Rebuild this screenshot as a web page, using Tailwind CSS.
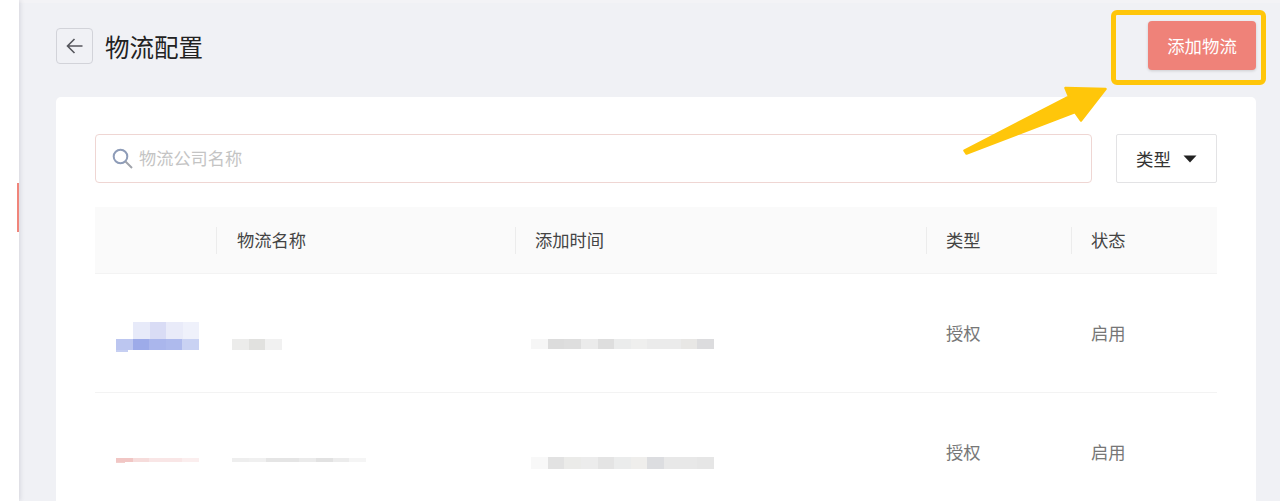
<!DOCTYPE html>
<html lang="zh">
<head>
<meta charset="utf-8">
<script src="https://cdn.jsdelivr.net/npm/@tailwindcss/browser@4"></script>
</head>
<body class="overflow-hidden bg-white">
<div class="relative flex h-[501px] w-[1280px] overflow-hidden font-['Liberation_Sans','Noto_Sans_CJK_SC',sans-serif]">
  <aside class="relative z-10 flex h-full w-[19px] shrink-0 flex-col bg-white pt-[183px] shadow-[1px_0_5px_rgba(0,0,40,0.12)]">
    <div class="ml-auto h-[49px] w-[2px] bg-[#f0857b]"></div>
  </aside>
  <main class="h-full flex-1 border-t-[3px] border-[#f3f3f6] bg-[#f0f1f5] pl-[37px] pr-[24px]">
    <header class="flex h-[94px] items-start justify-between">
      <div class="mt-[25px] flex items-start">
        <button class="flex h-[36px] w-[37px] items-center justify-center rounded-[4px] border border-[#d2d3d9]">
          <svg class="h-[20px] w-[20px]" viewBox="0 0 20 20" fill="none" stroke="#55565c" stroke-width="1.6"><path d="M17.5 10H2.5M9.5 3L2.5 10l7 7"/></svg>
        </button>
        <h1 class="ml-[12px] pt-[3px] text-[24.5px] leading-[36px] text-[#222]">物流配置</h1>
      </div>
      <button class="mt-[18px] h-[49px] w-[108px] rounded-[4px] bg-[#ef8279] pt-[3px] text-[17.4px] text-white shadow-[0_1px_3px_rgba(0,0,0,0.15)]">添加物流</button>
    </header>
    <section class="h-[500px] rounded-t-[5px] bg-white px-[39px] pt-[37px]">
      <div class="flex justify-between">
        <div class="flex h-[49px] w-[997px] items-center rounded-[4px] border border-[#efd6d3] pl-[16px]">
          <svg class="h-[21px] w-[21px]" viewBox="0 0 21 21" fill="none" stroke-width="2"><circle cx="8.5" cy="8.5" r="6.8" stroke="#8e9cb8"/><path d="M13.5 13.5L20 20" stroke="#a0a3ab"/></svg>
          <span class="ml-[6px] pt-[2px] text-[17.2px] text-[#c4c4c4]">物流公司名称</span>
        </div>
        <button class="flex h-[49px] w-[101px] items-center justify-center rounded-[2px] border border-[#e3e3e5] text-[17.4px] text-[#333]">
          <span class="pt-[3px]">类型</span>
          <svg class="ml-[12px] h-[8px] w-[14px]" viewBox="0 0 14 8"><path d="M0.5 0.5h13L7 7.5z" fill="#222"/></svg>
        </button>
      </div>
      <div class="mt-[24px] grid grid-cols-[122px_299px_411px_145px_145px]">
        <div class="flex h-[67px] items-center border-b border-[#f3f3f3] bg-[#fafafa]"><span class="ml-auto h-[27px] w-px bg-[#ececec]"></span></div>
        <div class="flex h-[67px] items-center border-b border-[#f3f3f3] bg-[#fafafa] pl-[20px] text-[17.3px] text-[#444]"><span class="pt-[4px]">物流名称</span><span class="ml-auto h-[27px] w-px bg-[#ececec]"></span></div>
        <div class="flex h-[67px] items-center border-b border-[#f3f3f3] bg-[#fafafa] pl-[19px] text-[17.3px] text-[#444]"><span class="pt-[4px]">添加时间</span><span class="ml-auto h-[27px] w-px bg-[#ececec]"></span></div>
        <div class="flex h-[67px] items-center border-b border-[#f3f3f3] bg-[#fafafa] pl-[19px] text-[17.3px] text-[#444]"><span class="pt-[4px]">类型</span><span class="ml-auto h-[27px] w-px bg-[#ececec]"></span></div>
        <div class="flex h-[67px] items-center border-b border-[#f3f3f3] bg-[#fafafa] pl-[19px] text-[17.3px] text-[#444]"><span class="pt-[4px]">状态</span></div>

        <div class="flex h-[119px] flex-col justify-start border-b border-[#f3f3f3] pl-[21px] pt-[48px]">
          <div class="ml-[17px] flex h-[17px] w-[66px] blur-[0.5px]"><i class="flex-1 bg-[#e7eaf9]"></i><i class="flex-1 bg-[#d9dcf5]"></i><i class="flex-1 bg-[#e9ebf9]"></i><i class="flex-1 bg-[#eff1fb]"></i></div>
          <div class="flex h-[11px] w-[83px] blur-[0.5px]"><i class="flex-1 bg-[#bcc6f0]"></i><i class="flex-1 bg-[#9dabe9]"></i><i class="flex-1 bg-[#aab6ec]"></i><i class="flex-1 bg-[#aebaed]"></i><i class="flex-1 bg-[#c9d2f3]"></i></div>
          <div class="h-[2px] w-[12px] bg-[#c6cff2] blur-[0.4px]"></div>
        </div>
        <div class="h-[119px] border-b border-[#f3f3f3] pl-[15px] pt-[65px]">
          <div class="flex h-[11px] w-[50px] blur-[0.5px]"><i class="flex-1 bg-[#ececeb]"></i><i class="flex-1 bg-[#e1e1df]"></i><i class="flex-1 bg-[#f1f1f1]"></i></div>
        </div>
        <div class="h-[119px] border-b border-[#f3f3f3] pl-[15px] pt-[65px]">
          <div class="flex h-[10px] w-[183px] blur-[0.5px]"><i class="flex-1 bg-[#f6f6f6]"></i><i class="flex-1 bg-[#dcdcdc]"></i><i class="flex-1 bg-[#dedede]"></i><i class="flex-1 bg-[#ebebeb]"></i><i class="flex-1 bg-[#dedede]"></i><i class="flex-1 bg-[#ebecec]"></i><i class="flex-1 bg-[#efefee]"></i><i class="flex-1 bg-[#ebebeb]"></i><i class="flex-1 bg-[#ebebeb]"></i><i class="flex-1 bg-[#e8e7e5]"></i><i class="flex-1 bg-[#dcdcde]"></i></div>
        </div>
        <div class="flex h-[119px] items-center border-b border-[#f3f3f3] pl-[19px] pt-[3px] text-[17.3px] text-[#777]">授权</div>
        <div class="flex h-[119px] items-center border-b border-[#f3f3f3] pl-[19px] pt-[3px] text-[17.3px] text-[#777]">启用</div>

        <div class="h-[119px] pl-[21px] pt-[65px]">
          <div class="flex h-[4px] w-[83px] blur-[0.4px]"><i class="flex-1 bg-[#f1c6c4]"></i><i class="flex-1 bg-[#f6dcdb]"></i><i class="flex-1 bg-[#f9e6e6]"></i><i class="flex-1 bg-[#f9e6e6]"></i><i class="flex-1 bg-[#fbeeee]"></i></div>
          <div class="h-[1px] w-[9px] bg-[#f3cfcd]"></div>
        </div>
        <div class="h-[119px] pl-[15px] pt-[65px]">
          <div class="flex h-[4px] w-[134px] blur-[0.4px]"><i class="flex-1 bg-[#eeeeee]"></i><i class="flex-1 bg-[#f0f0f0]"></i><i class="flex-1 bg-[#e5e5e5]"></i><i class="flex-1 bg-[#e5e5e5]"></i><i class="flex-1 bg-[#ebebeb]"></i><i class="flex-1 bg-[#e2e2e2]"></i><i class="flex-1 bg-[#ececec]"></i><i class="flex-1 bg-[#f5f5f5]"></i></div>
        </div>
        <div class="h-[119px] pl-[15px] pt-[64px]">
          <div class="flex h-[12px] w-[183px] blur-[0.5px]"><i class="flex-1 bg-[#f8f8f8]"></i><i class="flex-1 bg-[#e2e2e2]"></i><i class="flex-1 bg-[#ebebe9]"></i><i class="flex-1 bg-[#ececec]"></i><i class="flex-1 bg-[#e4e4e4]"></i><i class="flex-1 bg-[#ebecec]"></i><i class="flex-1 bg-[#efeeec]"></i><i class="flex-1 bg-[#dcdde0]"></i><i class="flex-1 bg-[#e8e8e8]"></i><i class="flex-1 bg-[#e8e8e8]"></i><i class="flex-1 bg-[#e6e6e6]"></i></div>
        </div>
        <div class="flex h-[119px] items-center pl-[19px] pt-[3px] text-[17.3px] text-[#777]">授权</div>
        <div class="flex h-[119px] items-center pl-[19px] pt-[3px] text-[17.3px] text-[#777]">启用</div>
      </div>
    </section>
  </main>
  <div class="absolute left-[1111px] top-[10px] h-[75px] w-[155px] rounded-[6px] border-[5px] border-[#ffc60a]"></div>
  <svg class="absolute left-0 top-0" width="1280" height="501" fill="none"><path d="M964.5 150.5L1069 96.5L1065.5 88L1105.5 89L1081 120.5L1075 112L966.5 153.5Z" fill="#ffc60a" stroke="#ffc60a" stroke-width="2.5" stroke-linejoin="round"/></svg>
</div>
</body>
</html>
